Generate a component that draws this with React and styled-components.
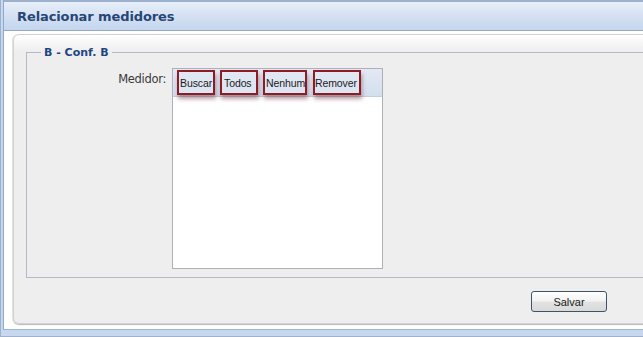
import React from "react";
import styled, { createGlobalStyle } from "styled-components";

const Global = createGlobalStyle`
  html, body { margin: 0; padding: 0; overflow: hidden; background: #fff; }
  #root { width: 643px; height: 337px; overflow: hidden; }
  * { box-sizing: border-box; }
`;

const FONT = `"DejaVu Sans", sans-serif`;
const SMALL = `"Liberation Sans", Arial, sans-serif`;

const Frame = styled.div`
  width: 670px;
  height: 337px;
  display: flex;
  flex-direction: column;
  background: #c6d7ee;
  border-left: 1px solid #9fb2cb;
  border-bottom: 1px solid #9fb2cb;
  padding: 0 0 6px 2px;
  font-family: ${FONT};
`;

const Header = styled.div`
  height: 31px;
  display: flex;
  align-items: center;
  padding-left: 13px;
  border-top: 2px solid #9cb1cc;
  border-bottom: 1px solid #98abc4;
  border-left: 1px solid #8fa9cc;
  background: linear-gradient(#e7eef8, #d6e2f3 45%, #c3d5ee);
`;

const Title = styled.h1`
  margin: 0;
  font-family: ${FONT};
  font-size: 13px;
  font-weight: bold;
  color: #264676;
  letter-spacing: -0.1px;
`;

const Body = styled.div`
  flex: 1;
  display: flex;
  background: #fff;
  border-left: 1px solid #8fa9cc;
  border-bottom: 1px solid #9cb4d6;
  padding: 3px 0 5px 9px;
`;

const Panel = styled.div`
  flex: 1;
  display: flex;
  flex-direction: column;
  border: 1px solid #d2d2d2;
  border-radius: 6px;
  background: linear-gradient(#ffffff 0, #f4f4f4 10px, #eeeeee 17px);
  box-shadow: 0 1px 1px #b9b9b9, -1px 0 1px #e4e4e4;
  padding: 11px 0 0 12px;
`;

const Fieldset = styled.fieldset`
  margin: 0;
  border: 1px solid #b5b8c8;
  padding: 9px 0 8px 14px;
  min-width: 0;
`;

const Legend = styled.legend`
  padding: 0 3px;
  font-family: ${FONT};
  font-size: 11px;
  font-weight: bold;
  line-height: 13px;
  color: #1d4683;
`;

const FieldRow = styled.div`
  display: flex;
  align-items: flex-start;
`;

const Label = styled.label`
  width: 125px;
  margin-right: 6px;
  padding-top: 4px;
  text-align: right;
  font-family: ${FONT};
  font-size: 11.5px;
  letter-spacing: -0.3px;
  color: #3a3a3a;
`;

const ListBox = styled.div`
  width: 211px;
  height: 201px;
  border: 1px solid #afafb8;
  background: #fff;
  display: flex;
  flex-direction: column;
`;

const Toolbar = styled.div`
  height: 28px;
  display: flex;
  align-items: flex-start;
  gap: 5px;
  padding: 1px 4px 0;
  background: linear-gradient(#e2e9f4, #d4dfee);
  border-bottom: 1px solid #c2cfe0;
`;

const ToolButton = styled.button`
  width: ${(p) => p.$w}px;
  height: 25px;
  margin-left: ${(p) => p.$ml || 0}px;
  padding: 0 0 0 ${(p) => p.$pl ?? 1}px;
  display: flex;
  align-items: center;
  justify-content: flex-start;
  overflow: hidden;
  white-space: nowrap;
  border: 2px solid #8e1c24;
  background: rgba(225, 232, 244, 0.6);
  box-shadow: 1px 4px 4px rgba(105, 45, 50, 0.45);
  font-family: ${SMALL};
  font-size: 10.5px;
  letter-spacing: -0.1px;
  color: #1a1a1a;
  cursor: pointer;
`;

const ButtonBar = styled.div`
  display: flex;
  margin-top: 13px;
  padding-left: 505px;
`;

const SaveButton = styled.button`
  width: 76px;
  height: 21px;
  padding: 0;
  border: 1px solid #3e5369;
  border-radius: 3px;
  background: linear-gradient(#ffffff, #f3f3f3 45%, #e2e2e2 55%, #d9d9d9);
  font-family: ${SMALL};
  font-size: 11px;
  color: #1a1a1a;
  cursor: pointer;
`;

const tools = [
  { label: "Buscar", w: 38, pl: 1 },
  { label: "Todos", w: 38, pl: 2 },
  { label: "Nenhum", w: 44, pl: 1 },
  { label: "Remover", w: 48, ml: 1, pl: 0 },
];

export default function App() {
  return (
    <>
      <Global />
      <Frame>
        <Header>
          <Title>Relacionar medidores</Title>
        </Header>
        <Body>
          <Panel>
            <Fieldset>
              <Legend>B - Conf. B</Legend>
              <FieldRow>
                <Label>Medidor:</Label>
                <ListBox>
                  <Toolbar>
                    {tools.map((t) => (
                      <ToolButton key={t.label} $w={t.w} $ml={t.ml} $pl={t.pl}>
                        {t.label}
                      </ToolButton>
                    ))}
                  </Toolbar>
                </ListBox>
              </FieldRow>
            </Fieldset>
            <ButtonBar>
              <SaveButton>Salvar</SaveButton>
            </ButtonBar>
          </Panel>
        </Body>
      </Frame>
    </>
  );
}
